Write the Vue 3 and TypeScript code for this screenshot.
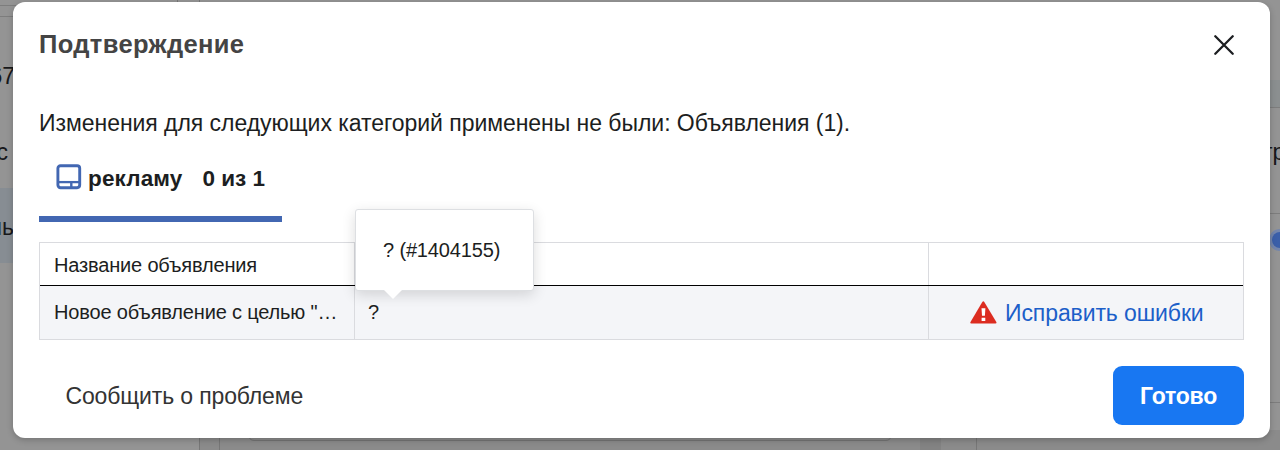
<script setup lang="ts">
interface AdRow {
  name: string
  message: string
}

const rows: AdRow[] = [{ name: 'Новое объявление с целью "…', message: '?' }]
const tooltip = '? (#1404155)'
</script>

<template>
  <div class="screen">
    <div class="page" aria-hidden="true">
      <i class="line top-a"></i>
      <i class="line top-b"></i>
      <i class="tick tick-a"></i>
      <i class="tick tick-b"></i>
      <i class="selected"></i>
      <span class="peek p1">67</span>
      <span class="peek p2">с</span>
      <span class="peek p3">ль</span>
      <i class="band"></i>
      <i class="line right-a"></i>
      <i class="line right-b"></i>
      <i class="line right-c"></i>
      <span class="peek p4">тр</span>
      <i class="knob"></i>
      <i class="bottom-panel"></i>
      <i class="gutter"></i>
      <i class="bottom-box"></i>
      <i class="tick tick-c"></i>
      <i class="tick tick-d"></i>
      <i class="tick tick-e"></i>
    </div>

    <section class="dialog" role="dialog">
      <header class="head">
        <h1>Подтверждение</h1>
        <button class="close" aria-label="Закрыть">
          <svg width="20" height="20" viewBox="0 0 20 20">
            <path d="M1.3 1.3 18.7 18.7M18.7 1.3 1.3 18.7" fill="none" stroke="#1c1e21" stroke-width="2.3" stroke-linecap="round" />
          </svg>
        </button>
      </header>

      <p class="summary">Изменения для следующих категорий применены не были: Объявления (1).</p>

      <div class="tab">
        <svg class="tab-icon" width="26" height="26" viewBox="0 0 26 26">
          <rect x="1.9" y="1.7" width="21.8" height="22" rx="2.6" fill="#fff" stroke="#4267b2" stroke-width="2.9" />
          <path d="M2 18.1H24" stroke="#4267b2" stroke-width="2.3" />
          <path d="M15.3 18V23.5" stroke="#4267b2" stroke-width="2.4" />
        </svg>
        <span class="tab-name">рекламу</span>
        <span class="tab-count">0 из 1</span>
      </div>

      <div class="table">
        <div class="row header">
          <div class="cell"><span class="t-head">Название объявления</span></div>
          <div class="cell"></div>
          <div class="cell"></div>
        </div>
        <div v-for="row in rows" :key="row.name" class="row body">
          <div class="cell"><span class="t-name">{{ row.name }}</span></div>
          <div class="cell">
            <span class="t-msg">{{ row.message }}</span>
            <div class="tooltip"><span>{{ tooltip }}</span></div>
          </div>
          <div class="cell action">
            <svg width="27" height="23" viewBox="0 0 27 23">
              <path d="M12.3 1Q13.3-.4 14.3 1L26.3 20.9Q27 22.4 25.5 22.5H1.3Q-.2 22.4.5 20.9Z" fill="#dc2c20" />
              <path d="M11.5 7.3H15.4L14.9 14.8H12ZM11.6 16.8H15.3V20.1H11.6Z" fill="#fff" />
            </svg>
            <a>Исправить ошибки</a>
          </div>
        </div>
      </div>

      <footer class="foot">
        <a class="report">Сообщить о проблеме</a>
        <button class="done">Готово</button>
      </footer>
    </section>
  </div>
</template>

<style>
body {
  margin: 0;
  overflow: hidden;
}
</style>

<style scoped>
.screen {
  position: relative;
  box-sizing: border-box;
  width: 1280px;
  height: 450px;
  padding: 2px 10px 0 13px;
  overflow: hidden;
  background: #949494;
  font-family: "Liberation Sans", Arial, sans-serif;
  color: #1c1e21;
  white-space: nowrap;
}
.page,
.page > * {
  position: absolute;
}
.page {
  inset: 0;
  overflow: hidden;
}
.line {
  height: 1px;
  background: #7d7d7d;
}
.tick {
  width: 1px;
  background: #777;
}
.top-a { left: 0; top: 5px; width: 30px; }
.top-b { left: 0; top: 16px; width: 30px; }
.tick-a { left: 177px; top: 0; height: 2px; }
.tick-b { left: 199px; top: 0; height: 2px; }
.selected { left: 0; top: 188px; width: 13px; height: 75px; background: #878d93; }
.peek {
  font-size: 23px;
  line-height: 26px;
  color: #17181a;
}
.p1 { right: 1265px; top: 63px; }
.p2 { right: 1272px; top: 139px; }
.p3 { right: 1266px; top: 214px; }
.p4 { left: 1262px; top: 139px; }
.band { left: 1270px; top: 80px; width: 10px; height: 27px; background: #8b8f90; }
.right-a { left: 1270px; top: 107px; width: 10px; }
.right-b { left: 1270px; top: 213px; width: 10px; }
.right-c { left: 1270px; top: 402px; width: 10px; }
.knob {
  left: 1272px;
  top: 232px;
  width: 16px;
  height: 16px;
  border-radius: 50%;
  background: #3b5fa9;
  box-shadow: 0 0 0 3px #7486ac;
}
.bottom-panel { left: 199px; top: 430px; width: 1081px; height: 20px; background: #8b8b8b; }
.gutter { left: 920px; top: 430px; width: 21px; height: 20px; background: #838383; }
.bottom-box {
  left: 248px;
  top: 420px;
  width: 642px;
  height: 19px;
  border: 1px solid #747474;
  border-radius: 0 0 6px 6px;
}
.tick-c { left: 199px; top: 430px; height: 20px; }
.tick-d { left: 219px; top: 430px; height: 20px; }
.tick-e { left: 976px; top: 430px; height: 20px; }

.dialog {
  position: relative;
  box-sizing: border-box;
  height: 436px;
  padding: 0 26px;
  display: flex;
  flex-direction: column;
  border-radius: 12px;
  background: #fff;
  box-shadow: 0 2px 6px rgba(0, 0, 0, 0.22);
}
.head {
  display: flex;
  justify-content: space-between;
  align-items: center;
  height: 84px;
}
h1 {
  margin: 0;
  font-size: 25.5px;
  line-height: 30px;
  letter-spacing: 0.36px;
  color: #444;
}
.close {
  display: flex;
  margin: 1px 10px 0 0;
  padding: 0;
  border: 0;
  background: none;
}
.summary {
  margin: 22px 0 0;
  font-size: 23px;
  line-height: 30px;
  letter-spacing: -0.045px;
}
.tab {
  display: flex;
  box-sizing: border-box;
  width: 243px;
  height: 59px;
  margin-top: 25px;
  padding: 1px 0 0 17px;
  border-bottom: 6px solid #4267b2;
  font-size: 22.5px;
  font-weight: 700;
  line-height: 30px;
}
.tab-icon {
  flex: none;
  margin-right: 6px;
}
.tab-name {
  letter-spacing: 0.15px;
}
.tab-count {
  margin-left: 20px;
}
.table {
  flex: none;
  margin-top: 20px;
  width: 1203px;
  border: 1px solid #dadbdf;
  font-size: 20px;
}
.row {
  display: grid;
  grid-template-columns: 315px 574px 314px;
}
.header {
  height: 42px;
  border-bottom: 1px solid #000;
}
.body {
  height: 53px;
  background: #f4f5f8;
}
.cell {
  position: relative;
  display: flex;
  align-items: center;
  padding-left: 14px;
}
.cell + .cell {
  border-left: 1px solid #dadbdf;
  margin-left: -1px;
  padding-left: 13px;
}
.t-head {
  margin-top: 2px;
  letter-spacing: -0.17px;
}
.t-name {
  letter-spacing: -0.17px;
}
.tooltip {
  position: absolute;
  left: 0;
  top: -77px;
  box-sizing: border-box;
  width: 179px;
  height: 82px;
  display: flex;
  align-items: center;
  padding-left: 27px;
  border: 1px solid #dddfe2;
  border-radius: 3px;
  background: #fff;
  box-shadow: 0 4px 14px rgba(0, 0, 0, 0.14);
  letter-spacing: -0.15px;
}
.tooltip::after {
  content: "";
  position: absolute;
  left: 27px;
  top: 79px;
  border: solid transparent;
  border-width: 10px 10px 0;
  border-top-color: #fff;
}
.cell.action {
  padding-left: 41px;
}
.action a {
  margin: 2px 0 0 8px;
  font-size: 23px;
  letter-spacing: -0.1px;
  color: #1c5fc9;
}
.foot {
  display: flex;
  justify-content: space-between;
  align-items: center;
  height: 59px;
  margin-top: 26px;
}
.report {
  margin: 2px 0 0 26.5px;
  font-size: 23px;
  letter-spacing: -0.14px;
  color: #333;
}
.done {
  width: 131px;
  height: 59px;
  padding: 0;
  border: 0;
  border-radius: 9px;
  background: #1877f2;
  color: #fff;
  font: 700 23px/30px "Liberation Sans", Arial, sans-serif;
  letter-spacing: -0.2px;
}
</style>
